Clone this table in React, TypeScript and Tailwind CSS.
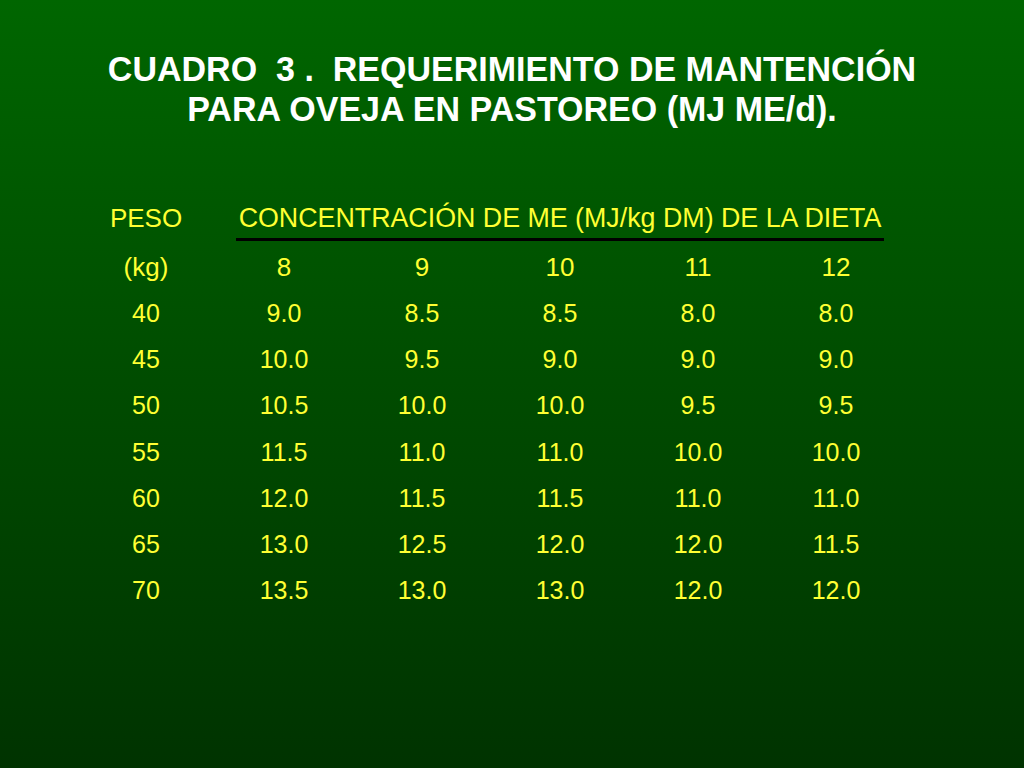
const weights = ["8", "9", "10", "11", "12"];

const rows: string[][] = [
  ["40", "9.0", "8.5", "8.5", "8.0", "8.0"],
  ["45", "10.0", "9.5", "9.0", "9.0", "9.0"],
  ["50", "10.5", "10.0", "10.0", "9.5", "9.5"],
  ["55", "11.5", "11.0", "11.0", "10.0", "10.0"],
  ["60", "12.0", "11.5", "11.5", "11.0", "11.0"],
  ["65", "13.0", "12.5", "12.0", "12.0", "11.5"],
  ["70", "13.5", "13.0", "13.0", "12.0", "12.0"],
];

export default function App() {
  return (
    <div className="flex h-[768px] w-[1024px] flex-col overflow-hidden bg-gradient-to-b from-[#006600] to-[#003300] font-['Liberation_Sans',Arial,sans-serif]">
      <h1 className="mt-[49px] scale-x-[0.972] text-center text-[35px] font-bold leading-[40px] text-white">
        CUADRO&nbsp; 3 .&nbsp; REQUERIMIENTO DE MANTENCIÓN
        <br />
        PARA OVEJA EN PASTOREO (MJ ME/d).
      </h1>

      <div className="ml-[77px] mt-[74px] grid w-[828px] grid-cols-6 text-center text-[26px] text-[#ffff33]">
        <div className="leading-[30px]">PESO</div>
        <div className="col-span-5 flex flex-col items-center">
          <span className="text-[26.8px] leading-[30px]">CONCENTRACIÓN DE ME (MJ/kg DM) DE LA DIETA</span>
          <div className="mt-[5px] h-[3px] w-[648px] bg-black" />
        </div>

        <div className="mt-[3px] leading-[46px]">(kg)</div>
        {weights.map((w) => (
          <div key={w} className="mt-[3px] leading-[46px]">
            {w}
          </div>
        ))}

        {rows.map((row) =>
          row.map((cell, i) => (
            <div key={row[0] + "-" + i} className="text-[25px] leading-[46.2px]">
              {cell}
            </div>
          )),
        )}
      </div>
    </div>
  );
}
